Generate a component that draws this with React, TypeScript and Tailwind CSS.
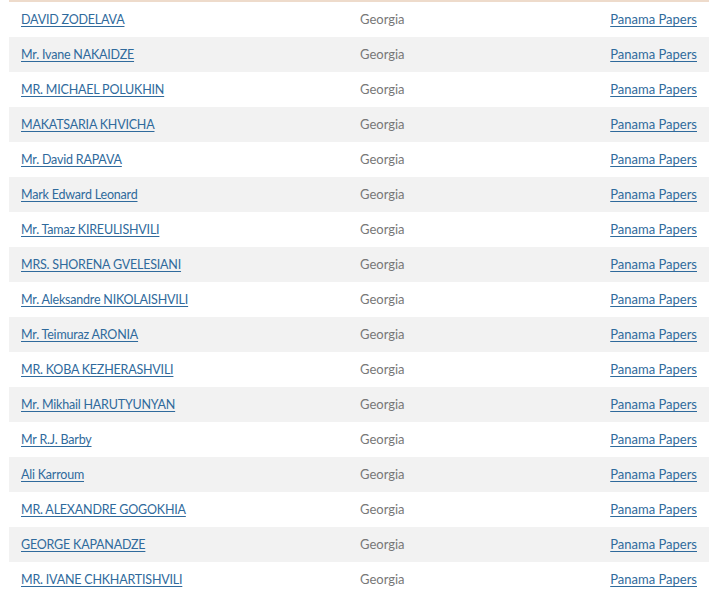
const rows = [
    'DAVID ZODELAVA',
    'Mr. Ivane NAKAIDZE',
    'MR. MICHAEL POLUKHIN',
    'MAKATSARIA KHVICHA',
    'Mr. David RAPAVA',
    'Mark Edward Leonard',
    'Mr. Tamaz KIREULISHVILI',
    'MRS. SHORENA GVELESIANI',
    'Mr. Aleksandre NIKOLAISHVILI',
    'Mr. Teimuraz ARONIA',
    'MR. KOBA KEZHERASHVILI',
    'Mr. Mikhail HARUTYUNYAN',
    'Mr R.J. Barby',
    'Ali Karroum',
    'MR. ALEXANDRE GOGOKHIA',
    'GEORGE KAPANADZE',
    'MR. IVANE CHKHARTISHVILI',
];

export default function App() {
    return (
        <div className="w-[726px] h-[596px] overflow-hidden bg-white font-['Lato','Liberation_Sans',sans-serif] text-[13px]">
            <div className="ml-[9px] w-[700px] border-t-2 border-[#eedbcb]">
                {rows.map((name, idx) => (
                    <div
                        key={`row-${idx}`}
                        className={`grid grid-cols-[339px_1fr_auto] items-baseline h-[35px] px-3 pt-[8px] leading-[18px] ${idx % 2 === 1 ? 'bg-[#f2f2f2]' : 'bg-white'}`}
                    >
                        <a href="#" className="text-[12.5px] tracking-[-0.2px] text-[#2f6a9c] underline underline-offset-2">{name}</a>
                        <span className="text-[#777]">Georgia</span>
                        <a href="#" className="text-[#2f6a9c] underline underline-offset-2">Panama Papers</a>
                    </div>
                ))}
            </div>
        </div>
    );
}
